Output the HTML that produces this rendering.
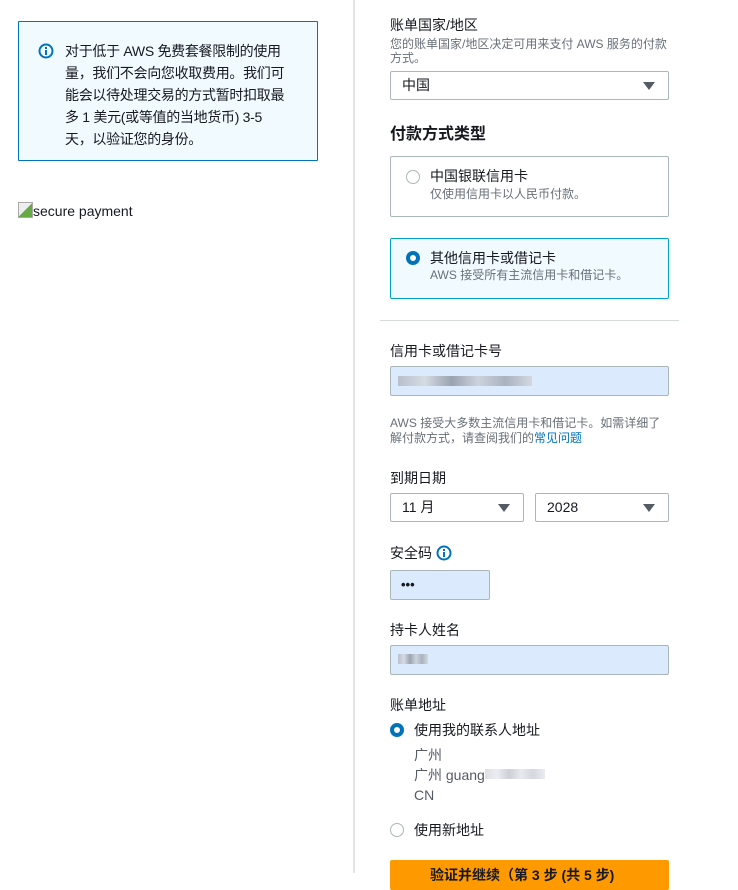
<!DOCTYPE html>
<html><head><meta charset="utf-8"><style>
*{margin:0;padding:0;box-sizing:border-box}
body{width:738px;height:873px;overflow:hidden;background:#fff;font-family:"Liberation Sans","Noto Sans CJK SC",sans-serif;color:#16191f;position:relative;font-size:14px}
.a{position:absolute;white-space:nowrap}
.lbl{font-size:14px;line-height:20px}
.sub{font-size:12px;color:#687078;line-height:15px}
.sel{position:absolute;border:1px solid #aab7b8;border-radius:2px;height:29px;background:#fff;font-size:14px;line-height:27px;padding-left:11px}
.sel:after{content:"";position:absolute;right:13px;top:10px;border-left:6px solid transparent;border-right:6px solid transparent;border-top:8px solid #545b64}
.inp{position:absolute;border:1px solid #aab7b8;border-radius:2px;height:30px;background:#dbeafd}
.card{position:absolute;left:390px;width:279px;height:61px;border:1px solid #aab7b8;border-radius:2px}
.r{position:absolute;width:14px;height:14px;border-radius:50%;border:1px solid #aab7b8;background:#fff}
.rs{position:absolute;width:14px;height:14px;border-radius:50%;border:4px solid #0073bb;background:#fff}
.blur{position:absolute;background:linear-gradient(90deg,#b8c0cc,#d6dbe3,#9aa3b0,#cdd3dc,#a9b2bf,#d4d9e1);height:10px}
</style></head><body>
<div class="a" style="left:353px;top:0;width:2px;height:873px;background:#e1e4e8"></div>
<div class="a" style="left:18px;top:21px;width:300px;height:140px;border:1px solid #0073bb;background:#f1faff;border-radius:1px"></div>
<svg class="a" style="left:38px;top:43px" width="16" height="16" viewBox="0 0 16 16"><circle cx="8" cy="8" r="6.5" fill="none" stroke="#0073bb" stroke-width="2"/><rect x="7" y="7" width="2" height="5" fill="#0073bb"/><rect x="7" y="4" width="2" height="2" fill="#0073bb"/></svg>
<div class="a" style="left:65px;top:40px;font-size:14px;line-height:22px;letter-spacing:-0.3px">对于低于 AWS 免费套餐限制的使用<br>量，我们不会向您收取费用。我们可<br>能会以待处理交易的方式暂时扣取最<br>多 1 美元(或等值的当地货币) 3-5<br>天，以验证您的身份。</div>
<div class="a" style="left:18px;top:202px;width:15px;height:16px;border:1px solid #aaa;background:linear-gradient(135deg,#eee 50%,#6a4 50%)"></div>
<div class="a" style="left:33px;top:203px;font-size:14px;line-height:16px">secure payment</div>

<div class="a lbl" style="left:390px;top:15px">账单国家/地区</div>
<div class="a sub" style="left:390px;top:37px">您的账单国家/地区决定可用来支付 AWS 服务的付款</div>
<div class="a sub" style="left:390px;top:51px">方式。</div>
<div class="sel" style="left:390px;top:71px;width:279px">中国</div>
<div class="a" style="left:390px;top:125px;font-size:16px;font-weight:bold;line-height:20px">付款方式类型</div>
<div class="card" style="top:156px"></div>
<div class="r" style="left:406px;top:170px"></div>
<div class="a lbl" style="left:430px;top:166px">中国银联信用卡</div>
<div class="a sub" style="left:430px;top:187px">仅使用信用卡以人民币付款。</div>
<div class="card" style="top:238px;border-color:#00a1c9;background:#f1faff"></div>
<div class="rs" style="left:406px;top:251px"></div>
<div class="a lbl" style="left:430px;top:248px">其他信用卡或借记卡</div>
<div class="a sub" style="left:430px;top:268px">AWS 接受所有主流信用卡和借记卡。</div>
<div class="a" style="left:380px;top:320px;width:299px;height:1px;background:#d5dbdb"></div>

<div class="a lbl" style="left:390px;top:341px">信用卡或借记卡号</div>
<div class="inp" style="left:390px;top:366px;width:279px"></div>
<div class="blur" style="left:398px;top:376px;width:134px"></div>
<div class="a sub" style="left:390px;top:416px">AWS 接受大多数主流信用卡和借记卡。如需详细了</div>
<div class="a sub" style="left:390px;top:431px">解付款方式，请查阅我们的<span style="color:#0073bb">常见问题</span></div>
<div class="a lbl" style="left:390px;top:468px">到期日期</div>
<div class="sel" style="left:390px;top:493px;width:134px">11 月</div>
<div class="sel" style="left:535px;top:493px;width:134px">2028</div>
<div class="a lbl" style="left:390px;top:543px">安全码</div>
<svg class="a" style="left:436px;top:545px" width="16" height="16" viewBox="0 0 16 16"><circle cx="8" cy="8" r="6.5" fill="none" stroke="#0073bb" stroke-width="2"/><rect x="7" y="7" width="2" height="5" fill="#0073bb"/><rect x="7" y="4" width="2" height="2" fill="#0073bb"/></svg>
<div class="inp" style="left:390px;top:570px;width:100px"></div>
<div class="a" style="left:401px;top:575px;font-size:13px;font-weight:bold;line-height:20px">•••</div>
<div class="a lbl" style="left:390px;top:620px">持卡人姓名</div>
<div class="inp" style="left:390px;top:645px;width:279px"></div>
<div class="blur" style="left:398px;top:654px;width:30px"></div>
<div class="a lbl" style="left:390px;top:695px">账单地址</div>
<div class="rs" style="left:390px;top:723px"></div>
<div class="a lbl" style="left:414px;top:720px">使用我的联系人地址</div>
<div class="a lbl" style="left:414px;top:745px;color:#545b64">广州</div>
<div class="a lbl" style="left:414px;top:765px;color:#545b64">广州 guang</div>
<div class="blur" style="left:485px;top:769px;width:60px;opacity:.5"></div>
<div class="a lbl" style="left:414px;top:785px;color:#545b64">CN</div>
<div class="r" style="left:390px;top:823px"></div>
<div class="a lbl" style="left:414px;top:820px">使用新地址</div>
<div class="a" style="left:390px;top:860px;width:279px;height:30px;background:#ff9900;border-radius:2px"></div>
<div class="a" style="left:430px;top:865px;font-size:14px;font-weight:bold;line-height:20px">验证并继续（第 3 步 (共 5 步)</div>
</body></html>
